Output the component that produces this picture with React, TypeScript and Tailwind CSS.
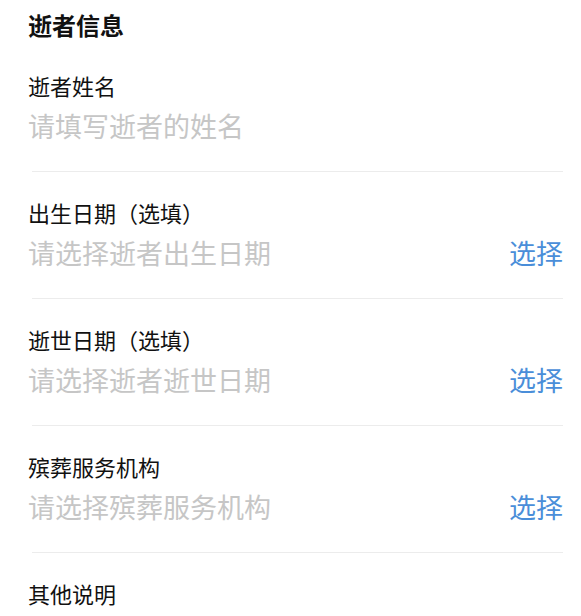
const rows = [
  { label: "逝者姓名", placeholder: "请填写逝者的姓名", action: false },
  { label: "出生日期（选填）", placeholder: "请选择逝者出生日期", action: true },
  { label: "逝世日期（选填）", placeholder: "请选择逝者逝世日期", action: true },
  { label: "殡葬服务机构", placeholder: "请选择殡葬服务机构", action: true },
];

export default function App() {
  return (
    <div
      className="w-[581px] h-[616px] overflow-hidden bg-white pl-[28px] pr-[18px]"
      style={{ fontFamily: '"Noto Sans CJK SC", "Noto Sans", sans-serif' }}
    >
      {/* section title */}
      <div className="h-[49px] flex items-center text-[24px] font-bold text-[#111]">
        逝者信息
      </div>

      {rows.map((row, i) => (
        <div key={row.label}>
          <div className={i === 0 ? "pt-[21px]" : "pt-[25px]"}>
            <div className="h-[30px] flex items-center text-[22px] text-[#111]">
              {row.label}
            </div>
            <div className="mt-[8px] h-[36px] flex items-center justify-between text-[27px]">
              <span className="text-[#c6c6c6]">{row.placeholder}</span>
              {row.action && <span className="text-[#4a8ed9]">选择</span>}
            </div>
          </div>
          <div className="pb-[27px]" />
          <div className="ml-[4px] h-px bg-[#ececec]" />
        </div>
      ))}

      <div className="pt-[25px]">
        <div className="h-[30px] flex items-center text-[22px] text-[#111]">
          其他说明
        </div>
      </div>
    </div>
  );
}
